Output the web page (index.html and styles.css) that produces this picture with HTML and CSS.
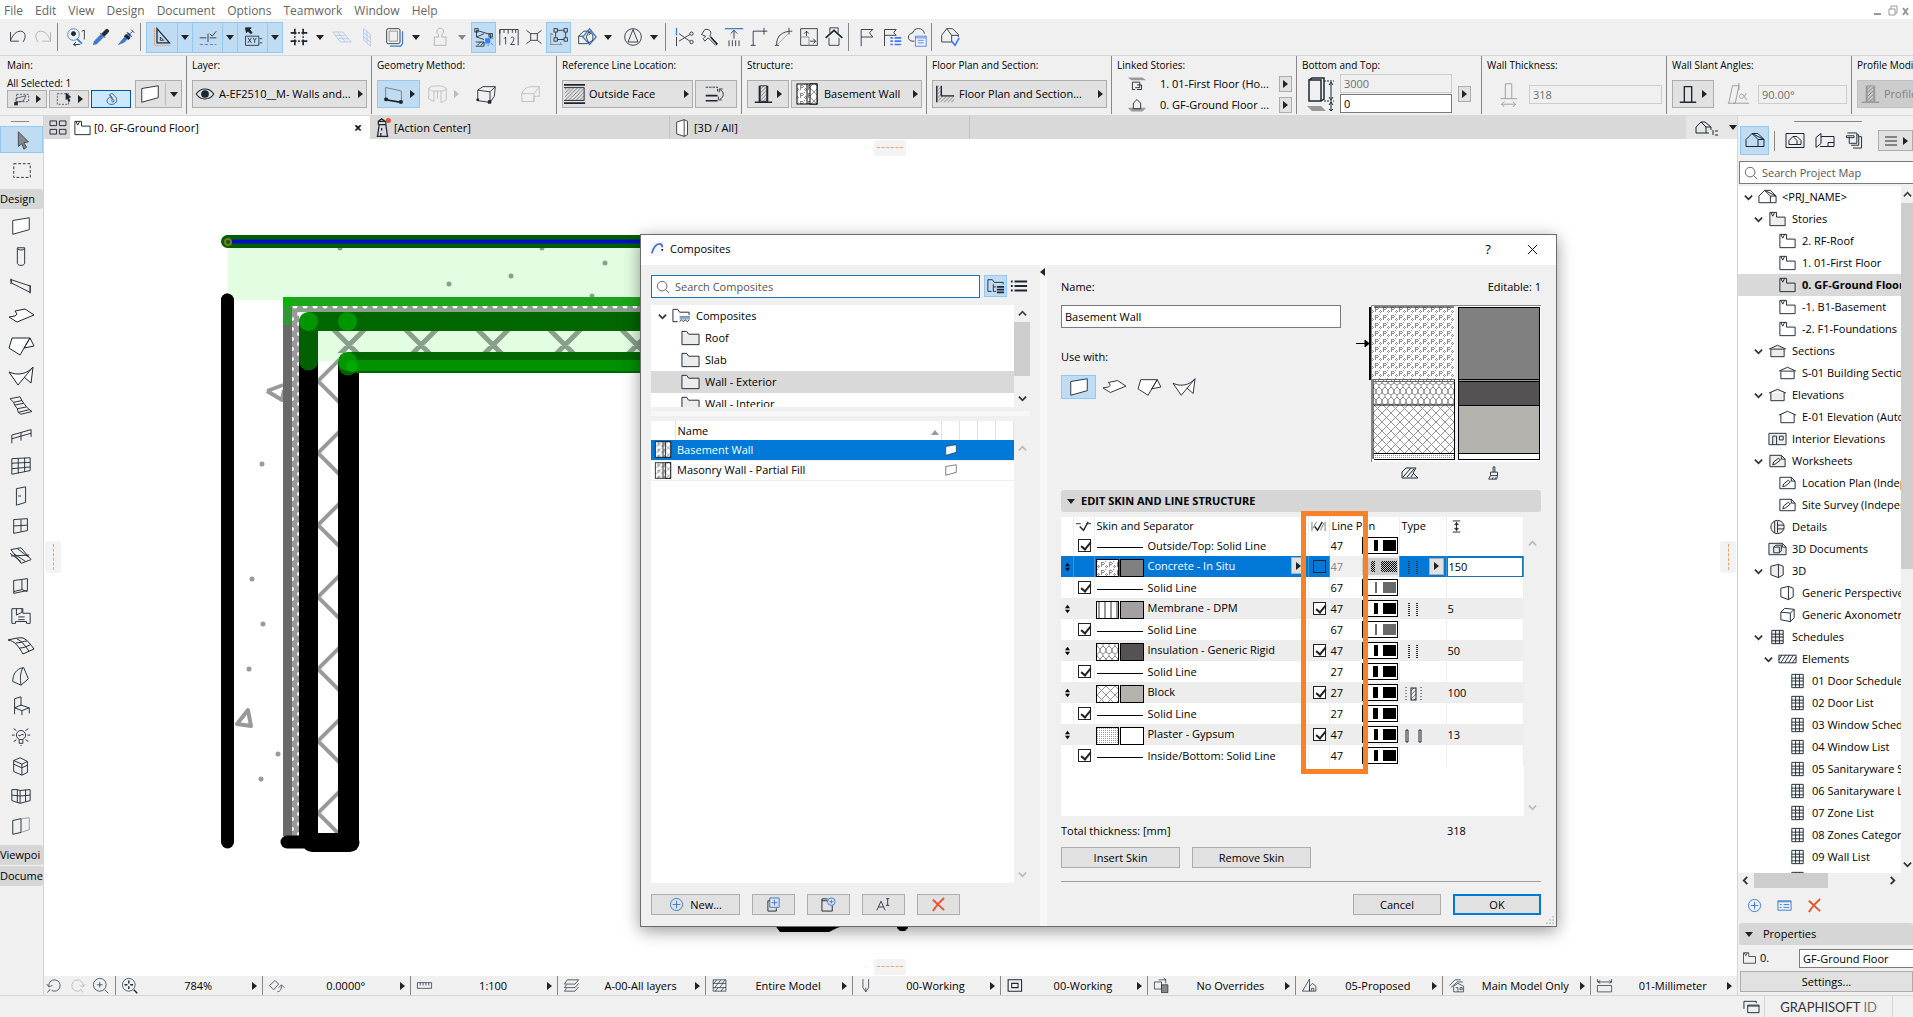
FILE: index.html
```html
<!DOCTYPE html>
<html lang="en">
<head>
  <meta charset="UTF-8">
  <meta name="viewport" content="width=device-width, initial-scale=1.0">
  <title>Composites</title>
  <link rel="stylesheet" href="styles.css">
</head>
<body>
  <!-- Icons and hatches -->
  <svg class="defs" aria-hidden="true">
    <defs>
      <pattern id="h-concrete" width="8" height="8" patternUnits="userSpaceOnUse"><rect width="8" height="8" fill="#fff"/><path d="M4 2h3v1H4zM4 3h1v4H4zM7 3h1v1H7zM5 4h2v1H5zM0 1h1v1H0zM1 5h1v1H1zM2 6h1v1H2zM0 6h1v1H0zM1 7h1v1H1z" fill="#8a8a8a"/></pattern>
      <pattern id="h-membrane" width="6" height="6" patternUnits="userSpaceOnUse"><rect width="6" height="6" fill="#fff"/><path d="M2 0v6" stroke="#999" stroke-width="2"/></pattern>
      <pattern id="h-insulation" width="6" height="10" patternUnits="userSpaceOnUse"><rect width="6" height="10" fill="#fff"/><path d="M0 0v2l3 3v3l-3 2M6 0v2L3 5v3l3 2" fill="none" stroke="#8c8c8c" stroke-width="1"/></pattern>
      <pattern id="h-block" width="9" height="9" patternUnits="userSpaceOnUse"><rect width="9" height="9" fill="#fff"/><path d="M0 0l9 9M9 0L0 9" stroke="#949494" stroke-width="1"/></pattern>
      <pattern id="h-gypsum" width="2" height="2" patternUnits="userSpaceOnUse"><rect width="2" height="2" fill="#fff"/><rect width="1" height="1" fill="#999"/></pattern>
      <pattern id="h-diag" width="4" height="4" patternUnits="userSpaceOnUse"><path d="M-1 5L5 -1M-1 1L1 -1M3 5L5 3" stroke="#777" stroke-width="1"/></pattern>
      <pattern id="h-dotsv" x="292" y="306" width="7" height="10" patternUnits="userSpaceOnUse"><rect width="7" height="10" fill="#9a9a9a"/><circle cx="0" cy="3" r="2" fill="#fff"/><circle cx="7" cy="8" r="2" fill="#fff"/></pattern>
      <pattern id="h-dotsh" x="292" y="306" width="10" height="6" patternUnits="userSpaceOnUse"><rect width="10" height="6" fill="#8ba08b"/><circle cx="3" cy="0" r="2.500" fill="#fff"/></pattern>
    </defs>
    <symbol id="i-undo" viewBox="0 0 24 24"><path d="M3 6v11h10M3 16C6 9 10 5 15 5c5 0 8 6 3 13"/></symbol>
    <symbol id="i-redo" viewBox="0 0 24 24"><path d="M21 6v11H11M21 16C18 9 14 5 9 5c-5 0-8 6-3 13"/></symbol>
    <symbol id="i-find" viewBox="0 0 24 24"><g stroke="#3a7bd5"><circle cx="9" cy="9" r="7"/><path d="M13 14l6 6" stroke-width="2"/><circle cx="9" cy="8" r="2.500" fill="#1d2733" stroke="#1d2733"/></g><path d="M19 5l3-1v11M9 21h8M12 18l-3 3 3 2"/></symbol>
    <symbol id="i-dropper" viewBox="0 0 24 24"><path d="M3 21l1-4 8-8 3 3-8 8z" fill="#3a7bd5" stroke="#3a6fc0"/><path d="M11 7l6 6M13 8l5-5c2-1 4 1 3 3l-5 5z" fill="#1d2733"/></symbol>
    <symbol id="i-syringe" viewBox="0 0 24 24"><path d="M3 21l5-6 7-8 3 3-8 8z" fill="#3a7bd5" stroke="#3a6fc0"/><path d="M13 6l6 6M17 8l3-3M18 3l4 4M12 9l5 4-2 2-5-4z" fill="#1d2733"/></symbol>
    <symbol id="i-setsquare" viewBox="0 0 24 24"><path d="M6 2v17h15z" stroke-width="1.500"/><path d="M10 12v4h4z"/><path d="M3 1v21h19" stroke="#e09040" stroke-dasharray="2 1"/></symbol>
    <symbol id="i-snapline" viewBox="0 0 24 24"><path d="M2 13h8M14 13h8M12 8v10M14 8l3 3 5-6"/><path d="M2 21h20" stroke="#3a7bd5" stroke-dasharray="4 2"/></symbol>
    <symbol id="i-tracker" viewBox="0 0 24 24"><path d="M3 1l7 0-2 2 3 4-2 1-3-3-2 2z" fill="#1d2733"/><path d="M3 11h16v11H3zM6 13l4 6m0-6l-4 6M12 13l2 3 2-3m-2 3v3M20 14h3M20 19h3"/></symbol>
    <symbol id="i-grid" viewBox="0 0 24 24"><path d="M7 2v20M17 2v20M2 7h20M2 17h20" stroke-dasharray="7 2 2 2" stroke-width="2"/></symbol>
    <symbol id="i-plane" viewBox="0 0 24 24"><path d="M1 6h12l10 12H10zM7 6l9 12M4 10h12M7 14h12" stroke="#a9c3ea"/></symbol>
    <symbol id="i-plane2" viewBox="0 0 24 24"><path d="M8 2v14l8 7V9zM12 5v14M8 7l8 6M8 12l8 6" stroke="#a9c3ea"/></symbol>
    <symbol id="i-sheets" viewBox="0 0 24 24"><rect x="2" y="2" width="16" height="18" rx="2"/><path d="M5 5h10v12H5z" stroke="#888"/><path d="M21 5v15l-2 3H6" stroke="#3a7bd5" stroke-width="1.500"/></symbol>
    <symbol id="i-stamp" viewBox="0 0 24 24"><path d="M4 22V12h5V9a4 4 0 1 1 4 0v3h5v10z" stroke="#aaa"/></symbol>
    <symbol id="i-editel" viewBox="0 0 24 24"><path d="M3 4l17 5v5M3 4v8l9 3M3 12l9-4"/><path d="M2 18h10v5H2M4 22l4-4M8 22l4-4"/><rect x="1" y="2" width="4" height="4"/><rect x="18" y="8" width="4" height="4"/><rect x="14" y="14" width="5" height="5" fill="#3a7bff" stroke="#3a7bff"/><path d="M12 22l3-3M20 19l3 3M21 14h2M17 20v3" stroke="#3a7bff"/></symbol>
    <symbol id="i-ruler" viewBox="0 0 24 24"><path d="M1 22V3h22v19M1 3v5M6 3v4M11 3v5M16 3v4M20 3v4M6 14l2-2v9M14 13c4-3 6 2 0 8h5"/></symbol>
    <symbol id="i-cross" viewBox="0 0 24 24"><path d="M8 8h8v8H8zM3 4l5 4M21 4l-5 4M3 20l5-4M21 20l-5-4"/></symbol>
    <symbol id="i-group" viewBox="0 0 24 24"><path d="M8 4h12v11H8z"/><rect x="6" y="2" width="4" height="4" fill="#c0dcf3"/><rect x="18" y="2" width="4" height="4" fill="#c0dcf3"/><rect x="6" y="13" width="4" height="4" fill="#c0dcf3"/><rect x="18" y="13" width="4" height="4" fill="#c0dcf3"/><path d="M5 9H2v12h12v-3M1 8h3M1 21h4M12 21h4" stroke="#888"/></symbol>
    <symbol id="i-prism" viewBox="0 0 24 24"><path d="M2 11l6-6h10l-4 5M2 11v9h10l2-2M2 11h6"/><path d="M15 2l8 10-8 9-8-9z" stroke="#3a7bd5" stroke-width="1.500"/><path d="M14 6l5 3v7l-5 3-3-7z"/></symbol>
    <symbol id="i-compass" viewBox="0 0 24 24"><circle cx="12" cy="12" r="10"/><path d="M12 3l6 15H6z"/></symbol>
    <symbol id="i-scissors" viewBox="0 0 24 24"><path d="M3 1v9" stroke="#3a7bd5" stroke-width="1.500"/><path d="M3 12v11M6 8l13 9M6 17l13-8"/><circle cx="21" cy="8" r="2"/><circle cx="21" cy="18" r="2"/></symbol>
    <symbol id="i-hammer" viewBox="0 0 24 24"><path d="M3 9l4-6c6-1 9 3 6 8l9 9-2 2-9-9-4 4-2-3 3-3z"/><path d="M14 12l8 9" stroke-width="2"/></symbol>
    <symbol id="i-raise" viewBox="0 0 24 24"><path d="M1 2h22" stroke="#3a7bd5" stroke-width="1.500"/><path d="M12 14V4M8 8l4-4 4 4M6 16v7M10 16v7M14 16v7M18 16v7"/></symbol>
    <symbol id="i-fillet" viewBox="0 0 24 24"><path d="M5 22V5h17M2 22h6M18 1v8"/></symbol>
    <symbol id="i-arc" viewBox="0 0 24 24"><path d="M3 22C3 11 9 5 22 5M18 1v8M1 22h5"/><path d="M3 22L20 5" stroke="#999"/></symbol>
    <symbol id="i-resize" viewBox="0 0 24 24"><path d="M2 2h20v20H2z"/><path d="M2 12h10v10" stroke="#888"/><path d="M9 11V5M6 8l3-3 3 3M13 17h7M17 14l3 3-3 3"/></symbol>
    <symbol id="i-roof" viewBox="0 0 24 24"><path d="M2 13L12 4l10 9" stroke-width="2"/><path d="M6 13v9h12v-9M7 7V1h10v6"/></symbol>
    <symbol id="i-flag" viewBox="0 0 24 24"><path d="M5 23V3h14l-4 4 4 5H5"/></symbol>
    <symbol id="i-flaglist" viewBox="0 0 24 24"><path d="M3 23V3h14l-3 4 3 3H3"/><path d="M10 13h3M10 17h3M10 21h3M15 13h8M15 17h8M15 21h8" stroke="#3a7bff" stroke-width="2"/></symbol>
    <symbol id="i-cloud" viewBox="0 0 24 24"><path d="M9 17H6c-6-1-6-9 1-10 1-7 13-7 14 1"/><rect x="10" y="11" width="13" height="12" stroke="#3a7bff"/><path d="M10 13h13M13 16h7M13 19h7" stroke="#3a7bff"/></symbol>
    <symbol id="i-housecheck" viewBox="0 0 24 24"><path d="M2 18V10l6-8 6 8v8H2M8 2h7l7 7v3M14 10h8"/><path d="M14 17l4 5 5-9" stroke="#3a7bff" stroke-width="2"/></symbol>
    <symbol id="i-wall" viewBox="0 0 24 24"><path d="M3 6l18-3v13L3 21z" fill="#fff"/></symbol>
    <symbol id="i-column" viewBox="0 0 24 24"><path d="M8 3h8v17c-1 3-7 3-8 0zM8 4c2 2 6 2 8 0"/></symbol>
    <symbol id="i-beam" viewBox="0 0 24 24"><path d="M1 5l21 7v7L2 9zM1 4v6M22 11v9"/></symbol>
    <symbol id="i-slab" viewBox="0 0 28 24"><path d="M8 7l10-2 9 6-17 7-8-5 6-1 2-2z" fill="#fff"/></symbol>
    <symbol id="i-roof2" viewBox="0 0 28 24"><path d="M5 4h18L13 21 2 14zM23 4l-6 10 10-2z" fill="#fff"/></symbol>
    <symbol id="i-shell" viewBox="0 0 28 24"><path d="M2 8c9 4 18 2 24-5L11 21zM26 3l-2 16-7-6" fill="#fff"/></symbol>
    <symbol id="i-stair" viewBox="0 0 24 24"><path d="M0 4l11-2 2 4-9 2-4-4M4 8l1 3 10-2-2-3M5 11l3 4 10-2-3-4M8 15l1 4 12-3-3-3M9 19l3 2 12-3-3-2"/></symbol>
    <symbol id="i-rail" viewBox="0 0 24 24"><path d="M2 20V11l21-6v8M2 15l21-6M12 8v9"/></symbol>
    <symbol id="i-curtain" viewBox="0 0 24 24"><path d="M2 4l20-1v14L2 21zM9 4v16M16 3v15M2 9l20-1M2 15l20-2"/></symbol>
    <symbol id="i-door" viewBox="0 0 24 24"><path d="M7 4l10-2v17L7 22zM9 12h3"/></symbol>
    <symbol id="i-window" viewBox="0 0 24 24"><path d="M4 5l15-1v13L4 20zM12 5v13M4 12l15-1"/></symbol>
    <symbol id="i-skylight" viewBox="0 0 24 24"><path d="M1 5l11-2 11 13-11 4zM1 12l20-1M5 10l12 8M8 4l12 9M0 9l12 9"/></symbol>
    <symbol id="i-opening" viewBox="0 0 24 24"><path d="M4 6l15-2v13L4 20zM13 5v11l6 2M4 18l9-2"/></symbol>
    <symbol id="i-zone" viewBox="0 0 24 24"><path d="M2 4h12v5h8v11h-4v-2H6v2H2zM7 4v7l6-3V4M9 13h7M9 16h7"/></symbol>
    <symbol id="i-mesh" viewBox="0 0 28 24"><path d="M1 6c5-1 11-3 15-2 5 2 7 6 11 11l-11 5C12 13 8 7 1 6zM9 9c4 0 8-2 11-2M13 14c4 0 7-2 10-3M10 5c5 2 8 7 12 12"/></symbol>
    <symbol id="i-morph" viewBox="0 0 24 24"><path d="M3 18C3 10 7 4 14 3l1 0 5 12-8 7-9-4M14 3c-3 6-3 12-2 19"/></symbol>
    <symbol id="i-object" viewBox="0 0 24 24"><path d="M5 21V4l7-2v10M5 14l7-3 9 3-8 3zM13 17v5M21 14v6"/></symbol>
    <symbol id="i-lamp" viewBox="0 0 24 24"><circle cx="12" cy="11" r="5"/><path d="M10 16v4h4v-4M12 22v1M9 11l2 1 2-2 2 1M2 11h3M19 11h3M4 4l3 2M20 4l-3 2M4 18l3-2M20 18l-3-2"/></symbol>
    <symbol id="i-equip" viewBox="0 0 24 24"><path d="M4 6l7-3 8 4v12l-6 3-9-4zM4 6l9 4 6-3M13 10v12M4 10l9 4 6-3"/></symbol>
    <symbol id="i-facade" viewBox="0 0 24 24"><path d="M2 5h6l3 1 11-1v12l-11 3-9-3zM8 5v14M11 6v14M17 5v13M2 11l9 1 11-1"/></symbol>
    <symbol id="i-wallend" viewBox="0 0 24 24"><path d="M3 6l9-2v15l-9 2z"/><path d="M12 4l9-1v13l-9 3" stroke="#999"/></symbol>
    <symbol id="i-arrow" viewBox="0 0 24 24"><path d="M8 3l11 11-5 1 3 5-3 2-2-6-4 3z" fill="#888" stroke="#444"/></symbol>
    <symbol id="i-marquee" viewBox="0 0 24 24"><rect x="3" y="4" width="18" height="15" stroke-dasharray="3 2"/></symbol>
    <symbol id="i-story" viewBox="0 0 20 16"><path d="M2 1h7v5h9v9H2zM3 1l2 4 2-4"/></symbol>
    <symbol id="i-house" viewBox="0 0 20 16"><path d="M1 14V7l6-6 6 6v7zM7 1h6l6 6v7h-6M13 7h6M7 1l12 6"/></symbol>
    <symbol id="i-section" viewBox="0 0 20 16"><path d="M1 6l9-4 9 4M3 6h14v8H3z"/></symbol>
    <symbol id="i-elev" viewBox="0 0 20 16"><path d="M1 6l9-4 9 4M3 5v9h14V5"/></symbol>
    <symbol id="i-intelev" viewBox="0 0 20 16"><path d="M1 2h18v12H1zM5 14V5h4v9M12 5h4v4h-4z"/></symbol>
    <symbol id="i-sheet" viewBox="0 0 20 16"><path d="M2 2h12l4 4v8H2zM14 2v4h4M5 12l1-3 5-4 2 2-5 4z"/></symbol>
    <symbol id="i-detail" viewBox="0 0 20 16"><circle cx="10" cy="8" r="7"/><path d="M7 2v12M10 2v12M10 6h7M10 10h7"/></symbol>
    <symbol id="i-3ddoc" viewBox="0 0 20 16"><path d="M1 2h14l4 4v8H1zM15 2v4h4M6 6h6v6H6zM6 6l2-2h6v6l-2 2"/></symbol>
    <symbol id="i-persp" viewBox="0 0 20 16"><path d="M3 3l8-2v14l-8-3zM11 1l5 2v9l-5 3"/></symbol>
    <symbol id="i-axo" viewBox="0 0 20 16"><path d="M3 5l10 1v9L3 13zM3 5l4-4 10 1-4 4M17 2v9l-4 4"/></symbol>
    <symbol id="i-table" viewBox="0 0 20 16"><path d="M4 1h12v14H4zM8 1v14M12 1v14M4 5h12M4 8h12M4 12h12"/></symbol>
    <symbol id="i-hatchbox" viewBox="0 0 20 16"><path d="M1 4h18v8H1zM3 12l5-8M7 12l5-8M11 12l5-8M1 9l3-5M15 12l4-6"/></symbol>
    <symbol id="i-folder" viewBox="0 0 20 16"><path d="M1 15V1h5l2 3h11v11z" fill="#ececec"/></symbol>
    <symbol id="i-folderlist" viewBox="0 0 20 16"><path d="M6 14H1V1h5l2 3h10v3"/><path d="M8 9h11" stroke="#1d2733"/><path d="M8 11h11" stroke="#3a7bd5"/><path d="M8 14l2-2 2 2 2-2 2 2 2-2"/></symbol>
    <symbol id="i-foldertree" viewBox="0 0 20 16"><path d="M5 14H1V1h5l2 3h10v2M7 6v8M7 9h3M7 14h3"/><path d="M11 9h8M11 12h8M11 15h8" stroke-width="2"/></symbol>
    <symbol id="i-list" viewBox="0 0 20 16"><path d="M1 3h2M5 3h14M1 8h2M5 8h14M1 13h2M5 13h14" stroke-width="2"/></symbol>
    <symbol id="i-search" viewBox="0 0 16 16"><circle cx="7" cy="7" r="5.500"/><path d="M11 11l4 4"/></symbol>
    <symbol id="i-plus" viewBox="0 0 16 16"><g stroke="#3a7bd5"><circle cx="8" cy="8" r="6.500"/><path d="M8 4v8M4 8h8"/></g></symbol>
    <symbol id="i-x" viewBox="0 0 16 16"><path d="M2 3l12 11M14 1C9 5 5 10 2 15" stroke="#e8502e" stroke-width="2"/></symbol>
    <symbol id="i-eye" viewBox="0 0 20 16"><path d="M2 8c4-6 12-6 16 0-4 6-12 6-16 0z"/><circle cx="10" cy="8" r="3" fill="#1d2733"/></symbol>
    <symbol id="i-chev" viewBox="0 0 10 10"><path d="M1 3l4 4 4-4" stroke="#333" stroke-width="2"/></symbol>
    <symbol id="i-chevup" viewBox="0 0 10 10"><path d="M1 7l4-4 4 4" stroke-width="2"/></symbol>
    <symbol id="i-sortdrag" viewBox="0 0 8 12"><path d="M1 5l3-4 3 4zM1 7l3 4 3-4z" fill="#000" stroke="none"/></symbol>
    <symbol id="i-zoomprev" viewBox="0 0 24 24"><path d="M4 13a8 8 0 1 1 4 6M1 10l3 4 5-2M6 17l-4 5"/></symbol>
    <symbol id="i-zoomnext" viewBox="0 0 24 24"><g stroke="#aaa"><path d="M20 13a8 8 0 1 0-4 6M23 10l-3 4-5-2M16 17l4 5"/></g></symbol>
    <symbol id="i-zoomin" viewBox="0 0 24 24"><circle cx="11" cy="11" r="9"/><path d="M18 18l5 5M11 7v8M7 11h8"/></symbol>
    <symbol id="i-zoomfit" viewBox="0 0 24 24"><circle cx="11" cy="11" r="9"/><path d="M18 18l5 5M11 5v4M11 13v4M5 11h4M13 11h4" stroke-width="2"/></symbol>
    <symbol id="i-rotate" viewBox="0 0 24 24"><path d="M2 12l8-7 5 5-7 8zM13 21c5-1 6-4 6-9M15 15l4-4 4 4"/></symbol>
    <symbol id="i-scale" viewBox="0 0 24 24"><path d="M2 8h20v8H2zM6 8v4M10 8v4M14 8v4M18 8v4"/></symbol>
    <symbol id="i-layers" viewBox="0 0 24 24"><path d="M6 4h16l-5 6H2zM5 11l-3 4h15l5-6M5 16l-3 4h15l5-6"/></symbol>
    <symbol id="i-model" viewBox="0 0 24 24"><path d="M3 4h18v16H3zM3 9h18M3 15h18M4 9l4-5M10 9l4-5M16 9l4-5M5 15l5-6M12 15l5-6M6 20l4-5M14 20l4-5"/></symbol>
    <symbol id="i-pen" viewBox="0 0 24 24"><path d="M7 3v12l4 6 4-6V3M11 15v6"/></symbol>
    <symbol id="i-frame" viewBox="0 0 24 24"><path d="M3 4h19v16H3zM8 9h9v6H8z" stroke-width="1.500"/></symbol>
    <symbol id="i-override" viewBox="0 0 24 24"><path d="M2 7h10v10H2zM8 4h10l-3-3M18 3v6"/><path d="M12 11h9v11h-9z" fill="#888"/></symbol>
    <symbol id="i-reno" viewBox="0 0 24 24"><path d="M2 20L12 3v17zM12 20v-7l4-4 5 4v7zM15 20v-4h3v4"/></symbol>
    <symbol id="i-main" viewBox="0 0 24 24"><path d="M2 12l8-8h8M4 15l9-8h8M8 21v-8l6-4 8 4v8zM11 15h3v6M17 15h3v3h-3z"/></symbol>
    <symbol id="i-dim" viewBox="0 0 24 24"><path d="M2 3v4h20V3M3 7l3-2M3 7l3 2M22 7l-3-2M22 7l-3 2M2 12h20v9H2z"/></symbol>
    <symbol id="i-magnet" viewBox="0 0 24 24"><path d="M13 3l6 6c4 5 0 11-5 11-6 1-10-4-7-8l3-3 4 4c-3 3 2 5 3 2l-7-9z"/><path d="M9 5l5 5"/></symbol>
    <symbol id="i-selrect" viewBox="0 0 24 24"><rect x="2" y="4" width="17" height="16" stroke-dasharray="3 2"/><path d="M15 3l7 6-3 1 2 5-2 1-2-5-2 2z" fill="#1d2733"/></symbol>
    <symbol id="i-selpoly" viewBox="0 0 24 24"><path d="M4 5h18v11H4z" stroke-dasharray="3 2"/><path d="M3 19v-8l15-4M3 17l11-2 4-8"/><rect x="1" y="17" width="4" height="4" fill="#1d2733"/></symbol>
    <symbol id="i-geo1" viewBox="0 0 24 24"><path d="M3 4l18 4v13L3 18z" stroke="#777"/><path d="M3 18l18 3" stroke-width="2"/><path d="M2 16h3v3H2zM19 19h3v3h-3z" fill="#1d2733"/></symbol>
    <symbol id="i-geo2" viewBox="0 0 24 24"><path d="M2 5c3-4 17-4 20 0v13c-2 2-5 3-6 3V8H8v12l-6-3zM2 5c2 3 4 3 6 3M16 8c3 0 5-1 6-3M12 8v9" stroke="#bbb"/></symbol>
    <symbol id="i-geo3" viewBox="0 0 24 24"><path d="M2 7l6-4h14l-1 11-5 7-14-2zM2 7l14 2 6-6M16 9v12"/><path d="M14 19h3v3h-3zM1 17h2v2H1z" fill="#1d2733"/></symbol>
    <symbol id="i-geo4" viewBox="0 0 24 24"><path d="M2 11c4-9 10-8 20-8v11h-6v6H2zM2 11h14v9M16 11l6-8" stroke="#bbb"/></symbol>
    <symbol id="i-refline" viewBox="0 0 24 24"><rect x="1" y="5" width="21" height="14" fill="url(#h-diag)" stroke="none"/><path d="M0 2h23M0 22h23" stroke-width="2"/><path d="M0 5h22v14H0"/></symbol>
    <symbol id="i-flip" viewBox="0 0 26 24"><path d="M2 4h14v5" stroke-dasharray="3 1"/><path d="M2 14h14M2 20h14" stroke-width="2"/><path d="M19 18c5-2 5-9 0-11M22 6h-4v4M21 19h-4v-4"/></symbol>
    <symbol id="i-struct" viewBox="0 0 24 24"><path d="M9 3h7v17H9z" fill="url(#h-diag)"/><path d="M3 21h19M8 3v18M17 3v18" stroke-width="1.500"/></symbol>
    <symbol id="i-comp" viewBox="0 0 22 22"><rect x="1" y="1" width="20" height="20" fill="url(#h-concrete)" stroke="#000"/><rect x="14" y="1" width="7" height="20" fill="url(#h-block)" stroke="#000"/><path d="M11 1v20" stroke="#000"/></symbol>
    <symbol id="i-fps" viewBox="0 0 24 24"><path d="M3 3h5v11h14v7H3z" fill="url(#h-diag)" stroke="none"/><path d="M3 3v18M8 3v11h14" stroke-width="1.500"/></symbol>
    <symbol id="i-storytop" viewBox="0 0 24 16"><path d="M2 1h16l4 3H6z" fill="#999" stroke="none"/><path d="M10 14H7V6h8v6h-5M12 9h5v5h-5"/></symbol>
    <symbol id="i-storybot" viewBox="0 0 24 16"><path d="M2 11h20l-4 4H6z" fill="#999" stroke="none"/><path d="M8 12V6l4-4 4 4v6z" fill="#f0f0f0"/></symbol>
    <symbol id="i-height" viewBox="0 0 28 38"><path d="M3 5h12v21H3zM3 5l3-2h12v21l-3 2" stroke-width="1.500"/><path d="M18 6h10M18 26h10" stroke-dasharray="2 1"/><path d="M25 7v17M23 10l2-3 2 3M23 22l2 3 2-3M25 27v9M23 30l2-3 2 3M23 34l2 2 2-2"/><path d="M1 31h14l5 5H6z" fill="#999" stroke="none"/></symbol>
    <symbol id="i-thick" viewBox="0 0 24 28"><path d="M3 19h18M8 19V3h7v16M4 25h15M7 22l-3 3 3 3M16 22l3 3-3 3" stroke="#999"/></symbol>
    <symbol id="i-upright" viewBox="0 0 24 24"><path d="M3 21h18M8 21V4h8v17" stroke-width="1.500"/></symbol>
    <symbol id="i-alpha" viewBox="0 0 26 26"><path d="M2 23h8L14 4H7L3 23M14 1v8M8 23h17M22 12c-6 12-10 2-5 1 3 0 3 6 6 6" stroke="#999"/></symbol>
    <symbol id="i-lighthouse" viewBox="0 0 20 24"><path d="M6 8h8l2 14H4zM5 8V4h9v4M3 22h14M9 12v3M8 18v4M5 4l4-3 4 3" stroke-width="1.500"/><circle cx="17" cy="3" r="3" fill="#e8502e" stroke="none"/></symbol>
    <symbol id="i-3dtab" viewBox="0 0 20 24"><path d="M3 5l9-3v20l-9-3z M12 2l4 2v16l-4 2" fill="#fff"/></symbol>
    <symbol id="i-tabs" viewBox="0 0 20 16"><path d="M2 1h7v5H2zM12 1h7v5h-7zM2 10h7v5H2zM12 10h7v5h-7z"/></symbol>
    <symbol id="i-tabhouse" viewBox="0 0 24 16"><path d="M1 13V7l5-5 5 5v6zM6 2h4l6 5M11 7h5v3M11 13h3M18 10v5M20 11h3M20 15h3"/></symbol>
    <symbol id="i-layout" viewBox="0 0 20 16"><path d="M1 15V5l5-4v10l-5 4M6 4h13v10H5M13 14v-4h6"/></symbol>
    <symbol id="i-publish" viewBox="0 0 20 18"><path d="M3 1h10v11H5V5M2 4h8v2H2zM13 3h2v11H7M15 5h3v12H9"/></symbol>
    <symbol id="i-view" viewBox="0 0 20 16"><path d="M1 1h18v14H1zM4 12V8l4-4 4 4v4zM8 4h4l4 4v4h-4"/></symbol>
    <symbol id="i-props" viewBox="0 0 16 14"><g stroke="#3a7bd5"><path d="M1 2h14v10H1z"/><path d="M3 6h2M7 6h6M3 9h2M7 9h6" stroke-width="1"/><path d="M1 3h14"/></g></symbol>
    <symbol id="i-wins" viewBox="0 0 18 14"><path d="M1 9V1h13v2M5 5h12v8H5zM5 6h12" /></symbol>
    <symbol id="i-dup" viewBox="0 0 16 16"><path d="M4 1h10v10H4z" stroke="#3a7bd5"/><path d="M9 3v6M6 6h6" stroke="#3a7bd5"/><path d="M4 4H2v11h9v-3"/></symbol>
    <symbol id="i-newfolder" viewBox="0 0 16 16"><path d="M7 2H1v13h11V9M1 4h6"/><circle cx="11" cy="5" r="4" stroke="#3a7bd5"/><path d="M11 3v4M9 5h4" stroke="#3a7bd5"/></symbol>
    <symbol id="i-rename" viewBox="0 0 18 16"><path d="M1 15L6 4l5 11M3 11h6M12 1h4M14 1v8M12 9h4"/></symbol>
    <symbol id="i-typedots" viewBox="0 0 20 16"><path d="M5 1v14M13 1v14" stroke-dasharray="1 1" stroke="#333" stroke-width="2"/></symbol>
    <symbol id="i-typeblock" viewBox="0 0 20 16"><path d="M2 1v14M17 1v14" stroke-dasharray="1 2"/><rect x="7" y="2" width="5" height="12" fill="url(#h-diag)"/></symbol>
    <symbol id="i-typeplaster" viewBox="0 0 20 16"><path d="M2 2h2v12H2zM15 2h2v12h-2z"/></symbol>
    <symbol id="i-logo" viewBox="0 0 16 16"><rect width="16" height="16" rx="3" fill="#f3f5fc" stroke="none"/><path d="M2 13C4 6 7 2 11 2c2 0 3 2 3 4" stroke="#4a6fc8" stroke-width="2"/><path d="M14 8v2" stroke="#223" stroke-width="2"/></symbol>
    <symbol id="i-linecheck" viewBox="0 0 16 12"><path d="M0 3h5M11 3h5"/><path d="M4 6l4 4 5-9" stroke-width="1.500"/></symbol>
    <symbol id="i-hatchcheck" viewBox="0 0 16 12"><path d="M1 1v10M15 1v10M2 8l4-7M10 10l4-8" stroke="#777"/><path d="M4 6l3 4 5-9" stroke-width="1.500"/></symbol>
    <symbol id="i-thickness" viewBox="0 0 10 14"><path d="M1 1h8M1 13h8M5 2v10M3 5l2-2 2 2zM3 9l2 2 2-2z"/></symbol>
    <symbol id="i-fill" viewBox="0 0 18 12"><path d="M1 11V5l4-4h10l-3 5 5 5z"/><path d="M2 10l8-9M6 10l7-8M10 10l2-3"/></symbol>
    <symbol id="i-brush" viewBox="0 0 12 16"><path d="M5 7V1h2v6M2 7h8v4H2zM2 11l-2 4h9l1-4M4 15l1-2M7 15l1-2"/></symbol>
  </svg>

  <nav class="menu">
    <a href="#">File</a><a href="#">Edit</a><a href="#">View</a><a href="#">Design</a><a href="#">Document</a><a href="#">Options</a><a href="#">Teamwork</a><a href="#">Window</a><a href="#">Help</a>
    <svg class="win-ctl" viewBox="0 0 36 12"><path d="M1 9h7" stroke-width="2"/><path d="M16 4h6v6h-6zM18 4V1h6v7h-2"/><path d="M30 3l5 7M35 3l-5 7" stroke-width="2"/></svg>
  </nav>

  <div class="toolbar">
    <button class="tool"><svg><use href="#i-undo"/></svg></button>
    <button class="tool off"><svg><use href="#i-redo"/></svg></button>
    <span class="sep"></span>
    <button class="tool"><svg><use href="#i-find"/></svg></button>
    <button class="tool"><svg><use href="#i-dropper"/></svg></button>
    <button class="tool"><svg><use href="#i-syringe"/></svg></button>
    <span class="sep"></span>
    <div class="tool-group">
      <button class="tool"><svg><use href="#i-setsquare"/></svg></button><button class="drop"></button>
      <button class="tool"><svg><use href="#i-snapline"/></svg></button><button class="drop"></button>
      <button class="tool"><svg><use href="#i-tracker"/></svg></button><button class="drop"></button>
    </div>
    <button class="tool"><svg><use href="#i-grid"/></svg></button><button class="drop"></button>
    <button class="tool"><svg><use href="#i-plane"/></svg></button>
    <button class="tool"><svg><use href="#i-plane2"/></svg></button>
    <button class="tool gap"><svg><use href="#i-sheets"/></svg></button><button class="drop"></button>
    <button class="tool gap"><svg><use href="#i-stamp"/></svg></button><button class="drop off"></button>
    <button class="tool on"><svg><use href="#i-editel"/></svg></button>
    <button class="tool"><svg><use href="#i-ruler"/></svg></button>
    <button class="tool"><svg><use href="#i-cross"/></svg></button>
    <button class="tool on"><svg><use href="#i-group"/></svg></button>
    <button class="tool gap"><svg><use href="#i-prism"/></svg></button><button class="drop"></button>
    <button class="tool gap"><svg><use href="#i-compass"/></svg></button><button class="drop"></button>
    <span class="sep"></span>
    <button class="tool"><svg><use href="#i-scissors"/></svg></button>
    <button class="tool"><svg><use href="#i-hammer"/></svg></button>
    <button class="tool"><svg><use href="#i-raise"/></svg></button>
    <button class="tool"><svg><use href="#i-fillet"/></svg></button>
    <button class="tool"><svg><use href="#i-arc"/></svg></button>
    <button class="tool"><svg><use href="#i-resize"/></svg></button>
    <button class="tool"><svg><use href="#i-roof"/></svg></button>
    <span class="sep"></span>
    <button class="tool"><svg><use href="#i-flag"/></svg></button>
    <button class="tool"><svg><use href="#i-flaglist"/></svg></button>
    <button class="tool"><svg><use href="#i-cloud"/></svg></button>
    <span class="sep"></span>
    <button class="tool"><svg><use href="#i-housecheck"/></svg></button>
  </div>

  <div class="infobox">
    <section class="info">
      <h4>Main:</h4>
      <div class="info-row main-row">
        <div class="selected">
          <span>All Selected: 1</span>
          <div class="mini-row">
            <button class="mini"><svg><use href="#i-selpoly"/></svg><i class="right"></i></button>
            <button class="mini"><svg><use href="#i-selrect"/></svg><i class="right"></i></button>
            <button class="mini active"><svg><use href="#i-magnet"/></svg></button>
          </div>
        </div>
        <button class="btn wall-btn"><svg><use href="#i-wall"/></svg><span class="split"></span><i class="down"></i></button>
      </div>
    </section>
    <section class="info">
      <h4>Layer:</h4>
      <div class="info-row"><button class="btn grow"><svg class="eye"><use href="#i-eye"/></svg><span>A-EF2510__M- Walls and...</span><i class="right"></i></button></div>
    </section>
    <section class="info">
      <h4>Geometry Method:</h4>
      <div class="info-row geo">
        <button class="geo-btn on"><svg><use href="#i-geo1"/></svg><i class="right"></i></button>
        <button class="geo-btn"><svg><use href="#i-geo2"/></svg><i class="right pale"></i></button>
        <button class="geo-btn"><svg><use href="#i-geo3"/></svg></button>
        <button class="geo-btn"><svg><use href="#i-geo4"/></svg></button>
      </div>
    </section>
    <section class="info">
      <h4>Reference Line Location:</h4>
      <div class="info-row">
        <button class="btn grow"><svg><use href="#i-refline"/></svg><span>Outside Face</span><i class="right"></i></button>
        <button class="btn square"><svg><use href="#i-flip"/></svg></button>
      </div>
    </section>
    <section class="info">
      <h4>Structure:</h4>
      <div class="info-row">
        <button class="btn square"><svg><use href="#i-struct"/></svg><i class="right"></i></button>
        <button class="btn grow roomy"><svg><use href="#i-comp"/></svg><span>Basement Wall</span><i class="right"></i></button>
      </div>
    </section>
    <section class="info">
      <h4>Floor Plan and Section:</h4>
      <div class="info-row"><button class="btn grow"><svg><use href="#i-fps"/></svg><span>Floor Plan and Section...</span><i class="right"></i></button></div>
    </section>
    <section class="info">
      <h4>Linked Stories:</h4>
      <div class="stories">
        <div><svg><use href="#i-storytop"/></svg><span>1. 01-First Floor (Ho...</span><button class="pop"><i class="right"></i></button></div>
        <div><svg><use href="#i-storybot"/></svg><span>0. GF-Ground Floor ...</span><button class="pop"><i class="right"></i></button></div>
      </div>
    </section>
    <section class="info">
      <h4>Bottom and Top:</h4>
      <div class="heights">
        <svg><use href="#i-height"/></svg>
        <div><input class="field" aria-label="Height" value="3000" disabled><input class="field" aria-label="Bottom" value="0"></div>
        <button class="pop"><i class="right"></i></button>
      </div>
    </section>
    <section class="info">
      <h4>Wall Thickness:</h4>
      <div class="info-row"><svg class="dim"><use href="#i-thick"/></svg><input class="field" aria-label="Wall thickness" value="318" disabled></div>
    </section>
    <section class="info">
      <h4>Wall Slant Angles:</h4>
      <div class="info-row"><button class="btn square"><svg><use href="#i-upright"/></svg><i class="right"></i></button><svg class="dim"><use href="#i-alpha"/></svg><input class="field" aria-label="Slant angle" value="90.00°" disabled></div>
    </section>
    <section class="info last">
      <h4>Profile Modifiers:</h4>
      <div class="info-row"><button class="btn disabled" disabled><svg><use href="#i-struct"/></svg><span>Profile</span></button></div>
    </section>
  </div>

  <div class="workspace">
    <aside class="toolbox">
      <span class="grip"></span>
      <button class="tb-tool on"><svg><use href="#i-arrow"/></svg></button>
      <button class="tb-tool marquee"><svg><use href="#i-marquee"/></svg></button>
      <h5>Design</h5>
      <div class="tb-list">
        <button><svg><use href="#i-wall"/></svg></button>
        <button><svg><use href="#i-column"/></svg></button>
        <button><svg><use href="#i-beam"/></svg></button>
        <button><svg class="wide"><use href="#i-slab"/></svg></button>
        <button><svg class="wide"><use href="#i-roof2"/></svg></button>
        <button><svg class="wide"><use href="#i-shell"/></svg></button>
        <button><svg><use href="#i-stair"/></svg></button>
        <button><svg><use href="#i-rail"/></svg></button>
        <button><svg><use href="#i-curtain"/></svg></button>
        <button><svg><use href="#i-door"/></svg></button>
        <button><svg><use href="#i-window"/></svg></button>
        <button><svg><use href="#i-skylight"/></svg></button>
        <button><svg><use href="#i-opening"/></svg></button>
        <button><svg><use href="#i-zone"/></svg></button>
        <button><svg class="wide"><use href="#i-mesh"/></svg></button>
        <button><svg><use href="#i-morph"/></svg></button>
        <button><svg><use href="#i-object"/></svg></button>
        <button><svg><use href="#i-lamp"/></svg></button>
        <button><svg><use href="#i-equip"/></svg></button>
        <button><svg><use href="#i-facade"/></svg></button>
        <button><svg><use href="#i-wallend"/></svg></button>
      </div>
      <h5>Viewpoi</h5>
      <h5>Docume</h5>
    </aside>

    <main class="center">
      <div class="tabs">
        <button class="tab-all"><svg><use href="#i-tabs"/></svg></button>
        <div class="tab active"><svg><use href="#i-story"/></svg><span>[0. GF-Ground Floor]</span><button class="tab-close">×</button></div>
        <div class="tab"><svg><use href="#i-lighthouse"/></svg><span>[Action Center]</span></div>
        <div class="tab"><svg><use href="#i-3dtab"/></svg><span>[3D / All]</span></div>
        <div class="tab-end"><svg><use href="#i-tabhouse"/></svg><i class="down"></i></div>
      </div>

      <div class="canvas">
        <svg class="drawing" viewBox="44 139 1692 837" width="1692" height="837">
          <g fill="none" stroke="#999" stroke-width="4">
            <path d="M267 391l16-6M267 391l15 9 2-10" stroke-linejoin="round"/>
            <path d="M237 724l11-14 3 16z" stroke-linejoin="round"/>
          </g>
          <g fill="#999"><circle cx="262" cy="464" r="2.500"/><circle cx="252" cy="579" r="2.500"/><circle cx="263" cy="624" r="2.500"/><circle cx="249" cy="669" r="2.500"/><circle cx="278" cy="754" r="2.500"/><circle cx="261" cy="779" r="2.500"/></g>
          <!-- Wall going down -->
          <path d="M227.500 300v542" stroke="#000" stroke-width="13" stroke-linecap="round"/>
          <path d="M228 248h420v52H228z" fill="#e3fde3"/>
          <rect x="221" y="299" width="13" height="10" fill="#000"/>
          <path d="M221 300a6.500 6.500 0 0 1 13 0z" fill="#000"/>
          <rect x="283" y="300" width="9" height="536" fill="#696969"/>
          <rect x="292" y="306" width="7" height="530" fill="url(#h-dotsv)"/>
          <rect x="299" y="340" width="19" height="500" fill="#000"/>
          <rect x="338" y="360" width="21" height="480" fill="#000"/>
          <path d="M287 842h60" stroke="#000" stroke-width="13" stroke-linecap="round"/>
          <path d="M312 842.500h38" stroke="#000" stroke-width="19" stroke-linecap="round"/>
          <rect x="318" y="331" width="330" height="30" fill="#e3fde3"/>
          <g clip-path="url(#cavity)" stroke="#999" stroke-width="4">
            <path d="M314 385l40-40M314 377l40 40M314 457l40-40M314 449l40 40M314 529l40-40M314 521l40 40M314 601l40-40M314 593l40 40M314 673l40-40M314 665l40 40M314 745l40-40M314 737l40 40M314 817l40-40M314 809l40 40"/>
          </g>
          <clipPath id="cavity"><rect x="318" y="352" width="20" height="481"/></clipPath>
          <clipPath id="cavity-top"><rect x="318" y="331" width="330" height="22"/></clipPath>
          <g clip-path="url(#cavity-top)" stroke="#8ba08b" stroke-width="5">
            <path d="M329 325l40 40M369 325l-40 40M401 325l40 40M441 325l-40 40M473 325l40 40M513 325l-40 40M545 325l40 40M585 325l-40 40M617 325l40 40M657 325l-40 40"/>
          </g>
          <g fill="#8ba08b"><circle cx="340" cy="248" r="2.500"/><circle cx="449" cy="284" r="2.500"/><circle cx="511" cy="276" r="2.500"/><circle cx="542" cy="248" r="2.500"/><circle cx="605" cy="263" r="2.500"/><circle cx="592" cy="296" r="2.500"/></g>
          <!-- Selected wall -->
          <path d="M227.500 241.500H650" stroke="#005f00" stroke-width="13" stroke-linecap="round"/>
          <path d="M230 241.500H650" stroke="#000fc8" stroke-width="4"/>
          <circle cx="228" cy="242" r="3" fill="none" stroke="#7a7a20" stroke-width="2"/>
          <rect x="283" y="300" width="9" height="25" fill="#2f9a35"/>
          <rect x="283" y="297" width="365" height="9" fill="#1ca61c"/>
          <rect x="283" y="297" width="8" height="8" fill="#06b406"/>
          <rect x="292" y="306" width="356" height="6" fill="url(#h-dotsh)"/>
          <path d="M308.500 322v39" stroke="#006000" stroke-width="19" stroke-linecap="round"/>
          <rect x="308" y="312" width="340" height="19" fill="#006600"/>
          <path d="M348 362v4" stroke="#006000" stroke-width="19" stroke-linecap="round"/>
          <rect x="347" y="352" width="300" height="21" fill="#006600"/>
          <rect x="347" y="360" width="300" height="11" fill="#009000"/>
          <g fill="#009600"><circle cx="308.500" cy="321.500" r="9.500"/><circle cx="347.500" cy="321.500" r="9.500"/><circle cx="347.500" cy="361.500" r="9.500"/></g>
          <circle cx="352" cy="366" r="6" fill="#00a800"/>
          <path d="M774 924h75l-12 4-8 4h-49zM897 924h11v4l-3 3h-5l-3-3z" fill="#000"/>
        </svg>
        <span class="handle top"></span>
        <span class="handle bottom"></span>
        <span class="handle left"></span>
        <span class="handle rightside"></span>
      </div>

      <div class="status">
        <div class="zooms"><svg><use href="#i-zoomprev"/></svg><svg><use href="#i-zoomnext"/></svg><svg><use href="#i-zoomin"/></svg></div>
        <div class="cell"><svg><use href="#i-zoomfit"/></svg><span>784%</span><i class="right"></i></div>
        <div class="cell"><svg><use href="#i-rotate"/></svg><span>0.0000°</span><i class="right"></i></div>
        <div class="cell"><svg><use href="#i-scale"/></svg><span>1:100</span><i class="right"></i></div>
        <div class="cell"><svg><use href="#i-layers"/></svg><span>A-00-All layers</span><i class="right"></i></div>
        <div class="cell"><svg><use href="#i-model"/></svg><span>Entire Model</span><i class="right"></i></div>
        <div class="cell"><svg><use href="#i-pen"/></svg><span>00-Working</span><i class="right"></i></div>
        <div class="cell"><svg><use href="#i-frame"/></svg><span>00-Working</span><i class="right"></i></div>
        <div class="cell"><svg><use href="#i-override"/></svg><span>No Overrides</span><i class="right"></i></div>
        <div class="cell"><svg><use href="#i-reno"/></svg><span>05-Proposed</span><i class="right"></i></div>
        <div class="cell"><svg><use href="#i-main"/></svg><span>Main Model Only</span><i class="right"></i></div>
        <div class="cell"><svg><use href="#i-dim"/></svg><span>01-Millimeter</span><i class="right"></i></div>
      </div>
    </main>

    <aside class="navigator">
      <span class="grip wide"></span>
      <div class="nav-tabs">
        <button class="on"><svg><use href="#i-house"/></svg></button>
        <span class="sep"></span>
        <button><svg><use href="#i-view"/></svg></button>
        <button><svg><use href="#i-layout"/></svg></button>
        <button><svg><use href="#i-publish"/></svg></button>
        <button class="nav-menu"><svg viewBox="0 0 14 12"><path d="M1 2h12M1 6h12M1 10h12"/></svg><i class="right"></i></button>
      </div>
      <label class="search nav-search"><svg><use href="#i-search"/></svg><input placeholder="Search Project Map" aria-label="Search Project Map"></label>
      <div class="nav-tree">
        <ul class="tree">
          <li><svg class="chev"><use href="#i-chev"/></svg><svg><use href="#i-house"/></svg><span>&lt;PRJ_NAME&gt;</span></li>
          <li class="l1 full"><svg class="chev"><use href="#i-chev"/></svg><svg><use href="#i-story"/></svg><span>Stories</span></li>
          <li class="l3"><svg><use href="#i-story"/></svg><span>2. RF-Roof</span></li>
          <li class="l3"><svg><use href="#i-story"/></svg><span>1. 01-First Floor</span></li>
          <li class="l3 selected-row bold"><svg><use href="#i-story"/></svg><span>0. GF-Ground Floor</span></li>
          <li class="l3"><svg><use href="#i-story"/></svg><span>-1. B1-Basement</span></li>
          <li class="l3"><svg><use href="#i-story"/></svg><span>-2. F1-Foundations</span></li>
          <li class="l1 full"><svg class="chev"><use href="#i-chev"/></svg><svg><use href="#i-section"/></svg><span>Sections</span></li>
          <li class="l3"><svg><use href="#i-section"/></svg><span>S-01 Building Section</span></li>
          <li class="l1 full"><svg class="chev"><use href="#i-chev"/></svg><svg><use href="#i-elev"/></svg><span>Elevations</span></li>
          <li class="l3"><svg><use href="#i-elev"/></svg><span>E-01 Elevation (Auto)</span></li>
          <li class="l2 full"><svg><use href="#i-intelev"/></svg><span>Interior Elevations</span></li>
          <li class="l1 full"><svg class="chev"><use href="#i-chev"/></svg><svg><use href="#i-sheet"/></svg><span>Worksheets</span></li>
          <li class="l3"><svg><use href="#i-sheet"/></svg><span>Location Plan (Independent)</span></li>
          <li class="l3"><svg><use href="#i-sheet"/></svg><span>Site Survey (Independent)</span></li>
          <li class="l2 full"><svg><use href="#i-detail"/></svg><span>Details</span></li>
          <li class="l2 full"><svg><use href="#i-3ddoc"/></svg><span>3D Documents</span></li>
          <li class="l1 full"><svg class="chev"><use href="#i-chev"/></svg><svg><use href="#i-persp"/></svg><span>3D</span></li>
          <li class="l3"><svg><use href="#i-persp"/></svg><span>Generic Perspective</span></li>
          <li class="l3"><svg><use href="#i-axo"/></svg><span>Generic Axonometry</span></li>
          <li class="l1 full"><svg class="chev"><use href="#i-chev"/></svg><svg><use href="#i-table"/></svg><span>Schedules</span></li>
          <li class="l4"><svg class="chev"><use href="#i-chev"/></svg><svg><use href="#i-hatchbox"/></svg><span>Elements</span></li>
          <li class="l5"><svg><use href="#i-table"/></svg><span>01 Door Schedule</span></li>
          <li class="l5"><svg><use href="#i-table"/></svg><span>02 Door List</span></li>
          <li class="l5"><svg><use href="#i-table"/></svg><span>03 Window Schedule</span></li>
          <li class="l5"><svg><use href="#i-table"/></svg><span>04 Window List</span></li>
          <li class="l5"><svg><use href="#i-table"/></svg><span>05 Sanitaryware Schedule</span></li>
          <li class="l5"><svg><use href="#i-table"/></svg><span>06 Sanitaryware List</span></li>
          <li class="l5"><svg><use href="#i-table"/></svg><span>07 Zone List</span></li>
          <li class="l5"><svg><use href="#i-table"/></svg><span>08 Zones Category</span></li>
          <li class="l5"><svg><use href="#i-table"/></svg><span>09 Wall List</span></li>
          <li class="l5"><svg><use href="#i-table"/></svg></li>
        </ul>
        <div class="vscroll"><svg><use href="#i-chevup"/></svg><span class="thumb"></span><svg><use href="#i-chev"/></svg></div>
      </div>
      <div class="hscroll"><svg class="to-left"><use href="#i-chev"/></svg><span class="thumb"></span><svg class="to-right"><use href="#i-chev"/></svg></div>
      <div class="nav-actions">
        <button><svg><use href="#i-plus"/></svg></button>
        <button><svg><use href="#i-props"/></svg></button>
        <button><svg><use href="#i-x"/></svg></button>
      </div>
      <h5 class="bar"><i class="down"></i>Properties</h5>
      <div class="prop-row"><svg><use href="#i-story"/></svg><label for="story">0.</label><input id="story" class="field" value="GF-Ground Floor"></div>
      <button class="btn settings">Settings...</button>
    </aside>
  </div>

  <footer class="footer">
    <svg><use href="#i-wins"/></svg>
    <span class="brand">GRAPHISOFT <em>ID</em></span>
  </footer>

  <div class="dialog" role="dialog" aria-label="Composites">
    <div class="titlebar">
      <svg class="logo"><use href="#i-logo"/></svg><span>Composites</span>
      <button class="help">?</button>
      <button class="close"><svg viewBox="0 0 12 12"><path d="M1 1l10 10M11 1L1 11" stroke="#000"/></svg></button>
    </div>
    <div class="dialog-body">
      <div class="left-pane">
        <div class="find-row">
          <label class="search focus"><svg><use href="#i-search"/></svg><input placeholder="Search Composites" aria-label="Search Composites"></label>
          <button class="view-btn on"><svg><use href="#i-foldertree"/></svg></button>
          <button class="view-btn"><svg><use href="#i-list"/></svg></button>
        </div>
        <div class="folders">
          <ul class="tree">
            <li class="root"><svg class="chev"><use href="#i-chev"/></svg><svg><use href="#i-folderlist"/></svg><span>Composites</span></li>
            <li class="sub"><svg><use href="#i-folder"/></svg><span>Roof</span></li>
            <li class="sub"><svg><use href="#i-folder"/></svg><span>Slab</span></li>
            <li class="sub selected-row"><svg><use href="#i-folder"/></svg><span>Wall - Exterior</span></li>
            <li class="sub"><svg><use href="#i-folder"/></svg><span>Wall - Interior</span></li>
          </ul>
          <div class="vscroll"><svg><use href="#i-chevup"/></svg><span class="thumb"></span><svg><use href="#i-chev"/></svg></div>
        </div>
        <div class="splitter"></div>
        <div class="list-wrap">
          <div class="list">
            <table class="composites">
              <thead><tr><th class="c-icon"></th><th>Name<i class="sort"></i></th><th class="c-use"></th><th class="c-use"></th><th class="c-use"></th><th class="c-use"></th></tr></thead>
              <tbody>
                <tr class="current"><td><svg class="comp"><use href="#i-comp"/></svg></td><td>Basement Wall</td><td><svg class="use"><use href="#i-wall"/></svg></td><td></td><td></td><td></td></tr>
                <tr><td><svg class="comp"><use href="#i-comp"/></svg></td><td>Masonry Wall - Partial Fill</td><td><svg class="use"><use href="#i-wall"/></svg></td><td></td><td></td><td></td></tr>
              </tbody>
            </table>
          </div>
          <div class="vscroll idle"><svg><use href="#i-chevup"/></svg><svg class="flip"><use href="#i-chevup"/></svg></div>
        </div>
        <div class="list-actions">
          <button class="btn new"><svg><use href="#i-plus"/></svg>New...</button>
          <button class="btn"><svg><use href="#i-dup"/></svg></button>
          <button class="btn"><svg><use href="#i-newfolder"/></svg></button>
          <button class="btn"><svg><use href="#i-rename"/></svg></button>
          <button class="btn"><svg><use href="#i-x"/></svg></button>
        </div>
      </div>

      <div class="divider"><i class="left"></i></div>

      <div class="right-pane">
        <div class="top-labels"><label for="cname">Name:</label><span>Editable: 1</span></div>
        <div class="head">
          <div class="head-left">
            <input id="cname" class="field" value="Basement Wall">
            <p>Use with:</p>
            <div class="use-with">
              <button class="on"><svg><use href="#i-wall"/></svg></button>
              <button><svg><use href="#i-slab"/></svg></button>
              <button><svg><use href="#i-roof2"/></svg></button>
              <button><svg><use href="#i-shell"/></svg></button>
            </div>
          </div>
          <div class="preview">
            <svg class="skin-preview" viewBox="0 0 186 157" width="186" height="157">
              <rect x="16" y="0" width="170" height="157" fill="#fff"/>
              <path d="M16.500 157V.5H186" stroke="#888"/>
              <rect x="17" y="2" width="83" height="74" fill="url(#h-concrete)"/>
              <rect x="18" y="76" width="82" height="24" fill="url(#h-insulation)"/>
              <rect x="18" y="100" width="82" height="48" fill="url(#h-block)"/>
              <rect x="18" y="148" width="82" height="6" fill="url(#h-gypsum)"/>
              <path d="M19 2h80M19 100h81M19 148.500h81M19 154.500h80M18 74v80M99.500 74v81" stroke="#000"/>
              <path d="M18 74.500h82M18 76.500h82" stroke="#666"/>
              <rect x="100" y="1" width="3" height="154" fill="#f0f0f0"/>
              <rect x="103.500" y="2.500" width="81" height="72" fill="#808080" stroke="#000"/>
              <rect x="103.500" y="74.500" width="81" height="2" fill="#999" stroke="#000"/>
              <rect x="103.500" y="76.500" width="81" height="24" fill="#555253" stroke="#000"/>
              <rect x="103.500" y="100.500" width="81" height="48" fill="#b4b3ae" stroke="#000"/>
              <rect x="103.500" y="148.500" width="81" height="6" fill="#fff" stroke="#000"/>
              <path d="M15 2v73" stroke="#000" stroke-width="2"/>
              <path d="M1 38.500h10" stroke="#000"/><path d="M10 35l4 3.500-4 3.500z" fill="#000" stroke="#000"/>
            </svg>
            <div class="preview-icons"><svg><use href="#i-fill"/></svg><svg class="brush"><use href="#i-brush"/></svg></div>
          </div>
        </div>

        <h5 class="bar strong"><i class="down"></i>EDIT SKIN AND LINE STRUCTURE</h5>

        <div class="skins-wrap">
          <div class="skins-box">
            <table class="skins">
              <thead>
                <tr><th class="s-drag"></th><th class="s-check"><svg class="hd"><use href="#i-linecheck"/></svg></th><th class="s-name">Skin and Separator</th><th class="s-check"><svg class="hd"><use href="#i-hatchcheck"/></svg></th><th class="s-pen">Line Pen</th><th class="s-type">Type</th><th><svg class="hd"><use href="#i-thickness"/></svg></th></tr>
              </thead>
              <tbody>
                <tr><td></td><td><input type="checkbox" aria-label="Line" checked></td><td><span class="line"></span>Outside/Top: Solid Line</td><td></td><td>47<span class="pen"></span></td><td></td><td></td></tr>
                <tr class="current"><td><svg class="drag"><use href="#i-sortdrag"/></svg></td><td></td><td><svg class="sw"><rect width="100%" height="100%" fill="url(#h-concrete)"/></svg><span class="sw c1"></span>Concrete - In Situ<button class="pop"><i class="right"></i></button></td><td><input type="checkbox" aria-label="Skin"></td><td class="dim-pen">47<span class="pen off"></span></td><td><svg class="type"><use href="#i-typedots"/></svg><button class="pop"><i class="right"></i></button></td><td class="edit"><input aria-label="Thickness" value="150"></td></tr>
                <tr><td></td><td><input type="checkbox" aria-label="Line" checked></td><td><span class="line"></span>Solid Line</td><td></td><td>67<span class="pen gray"></span></td><td></td><td></td></tr>
                <tr class="skin"><td><svg class="drag"><use href="#i-sortdrag"/></svg></td><td></td><td><svg class="sw"><rect width="100%" height="100%" fill="url(#h-membrane)"/></svg><span class="sw c2"></span>Membrane - DPM</td><td><input type="checkbox" aria-label="Skin" checked></td><td>47<span class="pen"></span></td><td><svg class="type"><use href="#i-typedots"/></svg></td><td>5</td></tr>
                <tr><td></td><td><input type="checkbox" aria-label="Line" checked></td><td><span class="line"></span>Solid Line</td><td></td><td>67<span class="pen gray"></span></td><td></td><td></td></tr>
                <tr class="skin"><td><svg class="drag"><use href="#i-sortdrag"/></svg></td><td></td><td><svg class="sw"><rect width="100%" height="100%" fill="url(#h-insulation)"/></svg><span class="sw c3"></span>Insulation - Generic Rigid</td><td><input type="checkbox" aria-label="Skin" checked></td><td>47<span class="pen"></span></td><td><svg class="type"><use href="#i-typedots"/></svg></td><td>50</td></tr>
                <tr><td></td><td><input type="checkbox" aria-label="Line" checked></td><td><span class="line"></span>Solid Line</td><td></td><td>27<span class="pen thick"></span></td><td></td><td></td></tr>
                <tr class="skin"><td><svg class="drag"><use href="#i-sortdrag"/></svg></td><td></td><td><svg class="sw"><rect width="100%" height="100%" fill="url(#h-block)"/></svg><span class="sw c4"></span>Block</td><td><input type="checkbox" aria-label="Skin" checked></td><td>27<span class="pen thick"></span></td><td><svg class="type"><use href="#i-typeblock"/></svg></td><td>100</td></tr>
                <tr><td></td><td><input type="checkbox" aria-label="Line" checked></td><td><span class="line"></span>Solid Line</td><td></td><td>27<span class="pen thick"></span></td><td></td><td></td></tr>
                <tr class="skin"><td><svg class="drag"><use href="#i-sortdrag"/></svg></td><td></td><td><svg class="sw"><rect width="100%" height="100%" fill="url(#h-gypsum)"/></svg><span class="sw c5"></span>Plaster - Gypsum</td><td><input type="checkbox" aria-label="Skin" checked></td><td>47<span class="pen"></span></td><td><svg class="type"><use href="#i-typeplaster"/></svg></td><td>13</td></tr>
                <tr><td></td><td><input type="checkbox" aria-label="Line" checked></td><td><span class="line"></span>Inside/Bottom: Solid Line</td><td></td><td>47<span class="pen"></span></td><td></td><td></td></tr>
              </tbody>
            </table>
          </div>
          <div class="vscroll idle"><svg><use href="#i-chevup"/></svg><svg class="flip"><use href="#i-chevup"/></svg></div>
          <div class="highlight"></div>
        </div>

        <div class="total"><span>Total thickness: [mm]</span><span>318</span></div>
        <div class="skin-actions"><button class="btn">Insert Skin</button><button class="btn">Remove Skin</button></div>
        <div class="confirm"><button class="btn">Cancel</button><button class="btn primary">OK</button></div>
      </div>
    </div>
    <svg class="resize" viewBox="0 0 10 10"><path d="M8 0h2v2H8zM8 4h2v2H8zM4 4h2v2H4zM8 8h2v2H8zM4 8h2v2H4zM0 8h2v2H0z" fill="#bbb" stroke="none"/></svg>
  </div>
</body>
</html>
```
FILE: styles.css
```css
* {
  box-sizing: border-box;
}

body {
  margin: 0;
  height: 100vh;
  display: flex;
  flex-direction: column;
  overflow: hidden;
  background: #f0f0f0;
  color: #000;
  font: 11px/16px "Open Sans", "Noto Sans", sans-serif;
}

button, input {
  font: inherit;
  color: inherit;
}

button {
  padding: 0;
  border: none;
  background: none;
  display: flex;
  align-items: center;
  justify-content: center;
}

svg {
  flex: none;
  fill: none;
  stroke: #1d2733;
}

h4, h5, p, ul {
  margin: 0;
  padding: 0;
  font-weight: normal;
}

.defs {
  position: absolute;
  width: 0;
  height: 0;
  stroke: none;
}

/* little triangles */
i.right, i.down, i.left, i.sort {
  display: block;
  flex: none;
  width: 0;
  height: 0;
  border: 4px solid transparent;
}

i.right {
  border-left: 5px solid #222;
  border-right: none;
}

i.right.pale {
  border-left-color: #bbb;
}

i.left {
  border-right: 5px solid #222;
  border-left: none;
}

i.down {
  border-top: 5px solid #222;
  border-bottom: none;
}

i.sort {
  border-bottom: 5px solid #999;
  border-top: none;
}

/* menu */
.menu {
  flex: none;
  display: flex;
  align-items: center;
  gap: 12px;
  height: 19px;
  padding: 2px 4px 0;
  background: #fff;
  font-size: 12px;
}

.menu a {
  color: #666;
  text-decoration: none;
}

.win-ctl {
  width: 36px;
  height: 12px;
  margin-left: auto;
  stroke: #999;
}

/* toolbar */
.toolbar {
  flex: none;
  display: flex;
  align-items: center;
  height: 37px;
  padding-left: 5px;
  border-bottom: 1px solid #d5d5d5;
}

.tool {
  width: 25px;
  height: 31px;
}

.tool svg {
  width: 20px;
  height: 20px;
}

.tool.off svg {
  stroke: #aaa;
}

.tool.gap {
  margin-left: 3px;
}

.on {
  background: #c0dcf3;
  box-shadow: inset 0 0 0 1px #90c8f6;
}

.drop {
  width: 18px;
  height: 31px;
}

.drop::after {
  content: "";
  border: 4px solid transparent;
  border-top: 5px solid #222;
  border-bottom: none;
}

.drop.off::after {
  border-top-color: #888;
}

.toolbar .sep {
  width: 1px;
  height: 28px;
  margin: 0 5px 0 2px;
  background: #888;
}

.tool-group {
  display: flex;
  margin-right: 3px;
  background: #c0dcf3;
  border: 1px solid #90c8f6;
}

.tool-group .tool {
  width: 30px;
  height: 29px;
}

.tool-group .drop {
  width: 15px;
  height: 29px;
  border-left: 1px solid #90c8f6;
}

.tool-group .drop + .tool {
  border-left: 1px solid #90c8f6;
}

/* info box */
.infobox {
  flex: none;
  display: flex;
  height: 60px;
  overflow: hidden;
  border-bottom: 1px solid #d9d9d9;
}

.info {
  flex: none;
  width: 185px;
  height: 58px;
  padding: 0 4px 0 5px;
  border-right: 1px solid #888;
}

.info:first-child {
  width: 187px;
  padding-left: 7px;
}

.info.last {
  border-right: none;
}

.info h4 {
  font-size: 10px;
  line-height: 19px;
  height: 24px;
}

.info-row {
  display: flex;
  align-items: center;
  gap: 2px;
  height: 28px;
}

.btn {
  height: 28px;
  background: #e1e1e1;
  border: 1px solid #adadad;
}

.info .btn {
  padding: 0 3px 0 1px;
  gap: 3px;
}

.info .btn.roomy {
  padding-left: 4px;
  gap: 6px;
}

.info .btn svg {
  width: 22px;
  height: 22px;
}

.btn.grow {
  flex: 1;
  white-space: nowrap;
}

.btn.grow span {
  flex: 1;
  text-align: left;
}

.btn.square {
  width: 42px;
}

.btn.disabled {
  width: 90px;
  flex: none;
  justify-content: flex-start;
  background: #ccc;
  border-color: #bfbfbf;
  color: #838383;
}

.btn.disabled svg {
  stroke: #999;
}

.main-row {
  justify-content: space-between;
}

.selected {
  align-self: flex-end;
  font-size: 10px;
  line-height: 14px;
}

.mini-row {
  display: flex;
  gap: 2px;
}

.mini {
  width: 40px;
  height: 18px;
  gap: 5px;
  background: #e1e1e1;
  border: 1px solid #adadad;
}

.mini svg {
  width: 18px;
  height: 16px;
}

.mini.active {
  background: #cce8ff;
  border-color: #005499;
}

.wall-btn {
  width: 47px;
}

.info .wall-btn {
  gap: 4px;
  padding: 0;
}

.split {
  width: 1px;
  height: 22px;
  background: #bbb;
}

.geo {
  gap: 1px;
}

.geo-btn {
  width: 44px;
  height: 28px;
  gap: 6px;
}

.geo-btn svg {
  width: 21px;
  height: 21px;
}

.stories {
  display: flex;
  flex-direction: column;
  gap: 5px;
  margin-top: -4px;
}

.stories div {
  display: flex;
  align-items: center;
  gap: 12px;
}

.stories svg {
  width: 22px;
  height: 16px;
  margin-left: 9px;
}

.stories span {
  flex: 1;
  white-space: nowrap;
}

.stories .pop {
  margin-left: -12px;
}

.pop {
  flex: none;
  width: 13px;
  height: 16px;
  background: #e1e1e1;
  border: 1px solid #adadad;
}

.field {
  min-width: 0;
  height: 19px;
  padding: 0 3px;
  background: #fff;
  border: 1px solid #7a7a7a;
  border-radius: 0;
}

.field:disabled {
  background: #f0f0f0;
  border-color: #ccc;
  color: #6d6d6d;
}

.heights {
  display: flex;
  align-items: center;
  gap: 6px;
  margin-top: -6px;
}

.heights svg {
  width: 28px;
  height: 38px;
  margin-left: 4px;
}

.heights div {
  display: flex;
  flex-direction: column;
  gap: 1px;
}

.heights .field {
  width: 112px;
}

.dim {
  width: 24px;
  height: 26px;
  margin-left: 10px;
}

.info-row .field {
  flex: 1;
  margin-left: 6px;
}

/* workspace */
.workspace {
  flex: 1;
  min-height: 0;
  display: flex;
}

.toolbox {
  flex: none;
  width: 44px;
  display: flex;
  flex-direction: column;
  border-right: 1px solid #d5d5d5;
}

.grip {
  flex: none;
  width: 18px;
  height: 1px;
  margin: 5px auto 4px 11px;
  background: #888;
}

.tb-tool {
  width: 43px;
  height: 27px;
}

.tb-tool.marquee {
  height: 36px;
}

.toolbox svg {
  width: 22px;
  height: 22px;
}

.toolbox svg.wide {
  width: 28px;
  height: 24px;
}

.toolbox h5 {
  flex: none;
  height: 20px;
  margin-bottom: 1px;
  background: #d6d6d6;
  border-radius: 0 3px 3px 0;
  font-size: 11px;
  line-height: 20px;
}

.tb-list {
  padding: 1px 0 4px;
}

.tb-list button {
  width: 41px;
  height: 30px;
}

.center {
  flex: 1;
  min-width: 0;
  display: flex;
  flex-direction: column;
}

.tabs {
  flex: none;
  display: flex;
  height: 23px;
  background: #d9d9d9;
}

.tab-all {
  width: 26px;
}

.tab-all svg {
  width: 19px;
  height: 15px;
}

.tab {
  display: flex;
  align-items: center;
  gap: 2px;
  width: 300px;
  padding: 0 8px 0 3px;
  border-right: 1px solid #c4c4c4;
}

.tab.active {
  background: #fff;
  border: none;
}

.tab svg {
  width: 19px;
  height: 20px;
}

.tab-close {
  margin-left: auto;
  font-size: 14px;
  font-weight: bold;
}

.tab-end {
  display: flex;
  align-items: center;
  gap: 10px;
  width: 51px;
  margin-left: auto;
  padding-left: 9px;
  background: #e6e6e6;
}

.tab-end svg {
  width: 24px;
  height: 16px;
}

.canvas {
  flex: 1;
  position: relative;
  overflow: hidden;
  background: #fff;
}

.drawing {
  display: block;
  stroke: none;
}

.handle {
  position: absolute;
  background: #f3f3f3;
  border-radius: 3px;
}

.handle::after {
  content: "";
  position: absolute;
}

.handle.top, .handle.bottom {
  left: 830px;
  width: 32px;
  height: 16px;
}

.handle.top { top: 1px; }
.handle.bottom { bottom: 1px; }

.handle.top::after, .handle.bottom::after {
  left: 3px;
  right: 3px;
  top: 7px;
  border-top: 1px dashed #f0a060;
}

.handle.left, .handle.rightside {
  top: 402px;
  width: 16px;
  height: 32px;
}

.handle.left { left: 1px; }
.handle.rightside { right: 1px; }

.handle.left::after, .handle.rightside::after {
  top: 3px;
  bottom: 3px;
  left: 8px;
  border-left: 1px dashed #f0a060;
}

.status {
  flex: none;
  display: flex;
  height: 19px;
}

.zooms {
  display: flex;
  align-items: center;
  gap: 6px;
  width: 71px;
  padding-left: 2px;
}

.status svg {
  width: 17px;
  height: 17px;
}

.cell {
  flex: 1;
  display: flex;
  align-items: center;
  padding: 0 5px;
  border-left: 1px solid #888;
}

.cell span {
  flex: 1;
  padding-left: 6px;
  text-align: center;
  white-space: nowrap;
}

/* navigator */
.navigator {
  flex: none;
  width: 176px;
  display: flex;
  flex-direction: column;
  overflow: hidden;
  border-left: 1px solid #d5d5d5;
}

.grip.wide {
  width: 68px;
  margin-left: 56px;
}

.nav-tabs {
  flex: none;
  display: flex;
  align-items: center;
  height: 29px;
  margin-bottom: 6px;
  padding-left: 2px;
}

.nav-tabs button {
  width: 30px;
  height: 29px;
}

.nav-tabs svg {
  width: 20px;
  height: 17px;
}

.nav-tabs .sep {
  width: 1px;
  height: 20px;
  margin: 0 6px 0 5px;
  background: #888;
}

.nav-tabs .nav-menu {
  flex: none;
  width: 35px;
  height: 21px;
  margin-left: 10px;
  gap: 5px;
  background: #e1e1e1;
  border: 1px solid #adadad;
}

.nav-tabs .nav-menu svg {
  width: 14px;
  height: 12px;
}

.search {
  display: flex;
  align-items: center;
  gap: 5px;
  height: 23px;
  padding-left: 4px;
  background: #fff;
  border: 1px solid #7a7a7a;
}

.search svg {
  width: 14px;
  height: 14px;
  stroke: #555;
}

.search input {
  flex: 1;
  min-width: 0;
  padding: 0;
  border: none;
  outline: none;
  background: none;
}

.search input::placeholder {
  color: #555;
  opacity: 1;
}

.search.focus {
  flex: 1;
  margin-right: 4px;
  border-color: #1a73b0;
}

.nav-search {
  flex: none;
  gap: 4px;
  margin: 0 0 2px 1px;
  border-right: none;
}

.nav-tree {
  flex: 1;
  min-height: 0;
  display: flex;
}

.tree {
  flex: 1;
  min-width: 0;
  overflow: hidden;
  background: #fff;
  list-style: none;
}

.tree li {
  display: flex;
  align-items: center;
  gap: 5px;
  height: 22px;
  padding-left: 6px;
  white-space: nowrap;
}

.tree svg {
  width: 19px;
  height: 16px;
}

.tree svg.chev {
  width: 9px;
  height: 9px;
}

.tree .l1 { padding-left: 16px; }
.tree .l2 { padding-left: 30px; }
.tree .l3 { padding-left: 40px; }
.tree .l4 { padding-left: 26px; }
.tree .l5 { padding-left: 50px; }

.tree .full svg:not(.chev) {
  fill: #eee;
}

.selected-row {
  background: #d9d9d9;
}

.bold {
  font-weight: bold;
}

.vscroll {
  flex: none;
  display: flex;
  flex-direction: column;
  align-items: center;
  width: 12px;
  background: #f0f0f0;
}

.vscroll svg {
  width: 9px;
  height: 17px;
  stroke: #444;
}

.vscroll .thumb {
  width: 100%;
  height: 366px;
  margin-bottom: auto;
  background: #cdcdcd;
}

.vscroll.idle {
  justify-content: space-between;
}

.vscroll.idle svg {
  stroke: #bbb;
}

.flip {
  transform: rotate(180deg);
}

.hscroll {
  flex: none;
  display: flex;
  align-items: center;
  height: 15px;
  padding: 0 16px 0 3px;
}

.hscroll svg {
  width: 9px;
  height: 9px;
}

.hscroll .thumb {
  width: 74px;
  height: 15px;
  margin: 0 auto 0 4px;
  background: #cdcdcd;
}

.to-left { transform: rotate(90deg); }
.to-right { transform: rotate(-90deg); }

.nav-actions {
  flex: none;
  display: flex;
  height: 35px;
  padding-left: 1px;
}

.nav-actions button {
  width: 30px;
}

.nav-actions svg {
  width: 15px;
  height: 15px;
}

.bar {
  flex: none;
  display: flex;
  align-items: center;
  gap: 10px;
  height: 22px;
  padding-left: 6px;
  background: #d6d6d6;
  border-radius: 3px 3px 0 0;
  font-size: 11px;
}

.navigator .bar {
  margin-left: 1px;
}

.prop-row {
  flex: none;
  display: flex;
  align-items: center;
  gap: 3px;
  height: 26px;
  padding-left: 4px;
}

.prop-row svg {
  width: 15px;
  height: 12px;
}

.prop-row label {
  width: 36px;
}

.prop-row .field {
  flex: 1;
  border-right: none;
}

.settings {
  flex: none;
  height: 21px;
  margin: 0 0 3px 2px;
}

.footer {
  flex: none;
  display: flex;
  align-items: center;
  justify-content: flex-end;
  height: 22px;
  padding-right: 20px;
  border-top: 1px solid #d5d5d5;
}

.footer svg {
  width: 17px;
  height: 14px;
  margin-right: 4px;
}

.brand {
  height: 22px;
  padding: 0 15px;
  border: 1px solid #d5d5d5;
  border-width: 0 1px;
  color: #333;
  font: 13px/22px Lato, sans-serif;
}

.brand em {
  font-style: normal;
  color: #777;
}

/* dialog */
.dialog {
  position: absolute;
  left: 640px;
  top: 234px;
  width: 917px;
  height: 693px;
  display: flex;
  flex-direction: column;
  background: #f0f0f0;
  border: 1px solid #6b6b6b;
  box-shadow: 0 4px 16px rgba(0, 0, 0, 0.4);
}

.titlebar {
  flex: none;
  display: flex;
  align-items: center;
  gap: 6px;
  height: 30px;
  padding: 0 16px 2px 9px;
  background: #fff;
}

.logo {
  width: 14px;
  height: 14px;
}

.help {
  width: 12px;
  margin-left: auto;
  margin-right: 24px;
  font-size: 13px;
}

.close {
  width: 16px;
}

.close svg {
  width: 11px;
  height: 11px;
}

.dialog-body {
  flex: 1;
  min-height: 0;
  display: flex;
}

.left-pane {
  flex: none;
  width: 399px;
  display: flex;
  flex-direction: column;
  padding: 10px 10px 11px;
}

.find-row {
  display: flex;
  margin-bottom: 7px;
}

.view-btn {
  width: 23px;
  height: 22px;
}

.view-btn svg {
  width: 18px;
  height: 16px;
}

.folders {
  display: flex;
  height: 102px;
}

.folders .tree .root { padding-left: 7px; }
.folders .tree .sub { padding-left: 30px; }

.left-pane .vscroll {
  width: 16px;
}

.folders .thumb {
  height: 54px;
}

.splitter {
  height: 5px;
  margin: 4px 0 5px;
  background: #f7f7f7;
}

.list-wrap {
  flex: 1;
  display: flex;
  margin-bottom: 11px;
}

.list {
  flex: 1;
  background: #fff;
}

table {
  width: 100%;
  table-layout: fixed;
  border-collapse: collapse;
}

th, td {
  padding: 0;
  text-align: left;
  font-weight: normal;
  white-space: nowrap;
}

.composites th {
  height: 19px;
  padding-left: 2px;
  border-right: 1px solid #e2e2e2;
}

.composites .c-icon { width: 24px; }
.composites .c-use { width: 18px; }

.composites .sort {
  float: right;
  margin: 7px 2px 0 0;
}

.composites td {
  height: 20px;
  padding-left: 2px;
  border-bottom: 1px solid #eee;
}

.composites svg {
  display: block;
  width: 20px;
  height: 17px;
}

.composites svg.use {
  width: 14px;
  height: 14px;
}

.current {
  background: #0078d7;
  color: #fff;
}

.left-pane .idle {
  padding-top: 19px;
}

.list-actions {
  display: flex;
  gap: 12px;
}

.list-actions .btn {
  width: 43px;
  height: 21px;
  gap: 6px;
}

.list-actions .new {
  width: 89px;
}

.list-actions svg {
  width: 15px;
  height: 15px;
}

.divider {
  flex: none;
  width: 7px;
  padding-top: 3px;
  background: #f7f7f7;
}

.right-pane {
  flex: 1;
  display: flex;
  flex-direction: column;
  padding: 14px 15px 11px 14px;
}

.top-labels {
  display: flex;
  justify-content: space-between;
  margin-bottom: 10px;
}

.head {
  display: flex;
  justify-content: space-between;
  height: 185px;
}

.head-left {
  width: 280px;
}

.head-left .field {
  width: 100%;
  height: 23px;
}

.head-left p {
  margin: 21px 0 10px;
}

.use-with {
  display: flex;
}

.use-with button {
  width: 35px;
  height: 24px;
}

.use-with svg {
  width: 26px;
  height: 22px;
}

.skin-preview {
  display: block;
  stroke: none;
}

.preview-icons {
  display: flex;
  gap: 66px;
  padding: 4px 0 0 46px;
}

.preview-icons svg {
  width: 18px;
  height: 14px;
}

.bar.strong {
  gap: 6px;
  border-radius: 3px;
  font-weight: bold;
}

.skins-wrap {
  position: relative;
  flex: 1;
  display: flex;
  margin-top: 5px;
}

.skins-box {
  width: 463px;
  background: #fff;
}

.skins {
  width: 463px;
}

.skins-wrap .vscroll {
  width: 17px;
  padding-top: 18px;
}

.skins th {
  height: 18px;
  padding-left: 2px;
  border-right: 1px solid #eee;
}

.skins .s-drag { width: 12px; }
.skins .s-check { width: 21px; }
.skins .s-name { width: 214px; }
.skins .s-pen { width: 70px; }
.skins .s-type { width: 47px; }

.skins .hd {
  display: block;
  width: 15px;
  height: 13px;
}

.skins td {
  height: 21px;
  padding-left: 1px;
  border-right: 1px solid #eee;
  line-height: 19px;
}

.skins .skin {
  background: #ededed;
}

.skins .current td {
  border-right-color: #3b93dc;
}

.skins .drag {
  display: block;
  width: 7px;
  height: 10px;
  margin-left: 2px;
}

.skins input[type="checkbox"] {
  appearance: none;
  display: block;
  width: 13px;
  height: 13px;
  margin: 0 0 0 3px;
  background: #fff;
  border: 1px solid #222;
}

.skins input[type="checkbox"]:checked::after {
  content: "";
  display: block;
  width: 4px;
  height: 8px;
  margin: 0 0 0 4px;
  border: solid #222;
  border-width: 0 2px 2px 0;
  transform: rotate(40deg);
}

.skins .current input[type="checkbox"] {
  background: #0078d7;
}

.line {
  display: inline-block;
  width: 46px;
  height: 1px;
  margin: 0 5px 0 1px;
  vertical-align: middle;
  background: #000;
}

.sw {
  display: inline-block;
  width: 23px;
  height: 18px;
  margin-right: 1px;
  vertical-align: middle;
  border: 1px solid #000;
  stroke: none;
}

span.sw {
  width: 24px;
  margin-right: 4px;
}

.c1 { background: #808080; }
.c2 { background: #a3a09f; }
.c3 { background: #555253; }
.c4 { background: #b4b3ae; }
.c5 { background: #fff; }

.skins .pop {
  float: right;
  width: 15px;
  height: 17px;
  margin: 1px 2px 0 0;
}

/* pen preview: thin line and colour box */
.pen {
  float: right;
  width: 36px;
  height: 17px;
  margin: 1px 1px 0 0;
  border: 1px solid #000;
  background:
    linear-gradient(#000, #000) 11px 2px / 4px 11px no-repeat,
    linear-gradient(#000, #000) 20px 2px / 13px 11px no-repeat #fff;
}

.pen.thick {
  background:
    linear-gradient(#000, #000) 10px 2px / 5px 11px no-repeat,
    linear-gradient(#000, #000) 20px 2px / 13px 11px no-repeat #fff;
}

.pen.gray {
  background:
    linear-gradient(#696969, #696969) 12px 2px / 2px 11px no-repeat,
    linear-gradient(#696969, #696969) 20px 2px / 13px 11px no-repeat #fff;
}

.pen.off {
  border-color: #ccc;
  background:
    linear-gradient(#ccc, #ccc) 0 0 / 8px 15px no-repeat,
    linear-gradient(#ccc, #ccc) 12px 0 / 6px 15px no-repeat,
    linear-gradient(#ccc, #ccc) 0 0 / 36px 2px no-repeat,
    linear-gradient(#ccc, #ccc) 0 13px / 36px 2px no-repeat,
    linear-gradient(#ccc, #ccc) 34px 0 / 2px 15px no-repeat,
    repeating-conic-gradient(#000 0 25%, #ccc 0 50%) 0 0 / 2px 2px;
}

.dim-pen {
  background: #f0f0f0;
  color: #888;
}

.type {
  width: 20px;
  height: 16px;
  margin-left: 3px;
  vertical-align: middle;
}

.skins .edit {
  padding: 0;
}

.edit input {
  display: block;
  width: 100%;
  height: 20px;
  padding: 0 1px;
  border: 1px solid #1a73b0;
  background: #fff;
  color: #000;
}

/* marks the line pen column */
.highlight {
  position: absolute;
  left: 240px;
  top: -6px;
  width: 67px;
  height: 263px;
  border: 5px solid #fb8128;
}

.total {
  display: flex;
  margin-top: 7px;
}

.total span:first-child {
  width: 386px;
}

.skin-actions {
  display: flex;
  gap: 12px;
  padding: 8px 0 13px;
  border-bottom: 1px solid #a0a0a0;
}

.skin-actions .btn {
  width: 119px;
  height: 21px;
}

.confirm {
  display: flex;
  justify-content: flex-end;
  gap: 12px;
  padding-top: 12px;
}

.confirm .btn {
  width: 88px;
  height: 21px;
}

.confirm .primary {
  border: 2px solid #0078d7;
}

.resize {
  position: absolute;
  right: 2px;
  bottom: 2px;
  width: 8px;
  height: 8px;
}
```
